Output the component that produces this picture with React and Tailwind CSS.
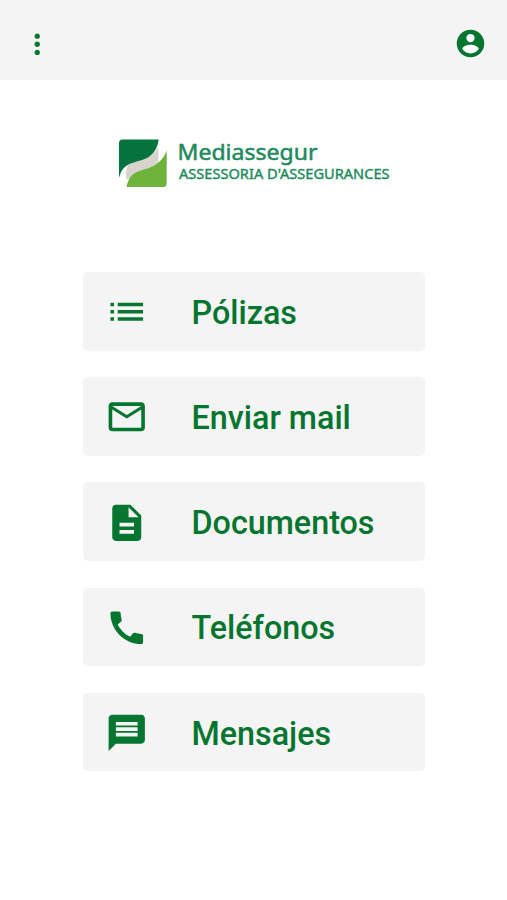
const ICONS = {
  more: "M12 8c1.1 0 2-.9 2-2s-.9-2-2-2-2 .9-2 2 .9 2 2 2zm0 2c-1.1 0-2 .9-2 2s.9 2 2 2 2-.9 2-2-.9-2-2-2zm0 6c-1.1 0-2 .9-2 2s.9 2 2 2 2-.9 2-2-.9-2-2-2z",
  list: "M3 13h2v-2H3v2zm0 4h2v-2H3v2zm0-8h2V7H3v2zm4 4h14v-2H7v2zm0 4h14v-2H7v2zM7 7v2h14V7H7z",
  mail: "M20 4H4c-1.1 0-2 .9-2 2v12c0 1.1.9 2 2 2h16c1.1 0 2-.9 2-2V6c0-1.1-.9-2-2-2zm0 14H4V8l8 5 8-5v10zm-8-7L4 6h16l-8 5z",
  doc: "M14 2H6c-1.1 0-1.99.9-1.99 2L4 20c0 1.1.89 2 1.99 2H18c1.1 0 2-.9 2-2V8l-6-6zm2 16H8v-2h8v2zm0-4H8v-2h8v2zm-3-5V3.5L18.5 9H13z",
  phone: "M20.01 15.38c-1.23 0-2.42-.2-3.53-.56-.35-.12-.74-.03-1.01.24l-1.57 1.97c-2.83-1.35-5.48-3.9-6.89-6.83l1.95-1.66c.27-.28.35-.67.24-1.02-.37-1.11-.56-2.3-.56-3.53 0-.54-.45-.99-.99-.99H4.19C3.65 3 3 3.24 3 3.99 3 13.28 10.73 21 20.01 21c.71 0 .99-.63.99-1.18v-3.45c0-.54-.45-.99-.99-.99z",
  message: "M20 2H4c-1.1 0-1.99.9-1.99 2L2 22l4-4h14c1.1 0 2-.9 2-2V4c0-1.1-.9-2-2-2zm-2 12H6v-2h12v2zm0-3H6V9h12v2zm0-3H6V6h12v2z",
};

const ITEMS = [
  { icon: "list", label: "Pólizas" },
  { icon: "mail", label: "Enviar mail" },
  { icon: "doc", label: "Documentos" },
  { icon: "phone", label: "Teléfonos" },
  { icon: "message", label: "Mensajes" },
];

function Icon({ name, className }) {
  return (
    <svg viewBox="0 0 24 24" fill="currentColor" className={className} aria-hidden="true">
      <path d={ICONS[name]} />
    </svg>
  );
}

function AccountIcon() {
  return (
    <svg viewBox="0 0 24 24" className="size-[33px]" aria-hidden="true">
      <circle cx="12" cy="12" r="10" fill="currentColor" />
      <circle cx="12" cy="8" r="3" fill="#fff" />
      <path
        d="M12 19.2c-2.5 0-4.71-1.28-6-3.22.03-1.99 4-3.08 6-3.08 1.99 0 5.97 1.09 6 3.08-1.29 1.94-3.5 3.22-6 3.22z"
        fill="#fff"
      />
    </svg>
  );
}

function Logo() {
  return (
    <svg viewBox="118 134 274 56" className="ml-[118px] mt-[54px] h-14 w-[274px]" role="img" aria-label="Mediassegur">
      <path d="M127 180C125.500 175 125.500 169 128.500 165C133 160 144 160 150 156C154 153 157 150 158 146.500C158.800 152 158.800 159 158 163L140 172L131 177Z" fill="#d8d3cc" />
      <path d="M119 178V143q0-3.500 3.500-3.500H158.700C157.500 148 154 154 147 158C141 161 132 162 127 165.500C121.500 169 120.500 173 119 178Z" fill="#04733d" />
      <path d="M126.500 187C128.500 177.500 132 174 138 171.500C144 169 149 168.500 154 165.500C161 161.500 165 156 166.700 150V183.500Q166.700 187 163.200 187Z" fill="#6cb23b" />
      <g fill="#1e8a5c" stroke="#1e8a5c" fontFamily="'Noto Sans','Open Sans',sans-serif">
        <text x="177.5" y="159.5" fontSize="21.8" textLength="140" lengthAdjust="spacingAndGlyphs" strokeWidth=".5">
          Mediassegur
        </text>
        <text x="179" y="179.2" fontSize="13.8" textLength="210.5" lengthAdjust="spacingAndGlyphs" strokeWidth=".4">
          ASSESSORIA D'ASSEGURANCES
        </text>
      </g>
    </svg>
  );
}

export default function App() {
  return (
    <div className="flex h-[900px] w-[507px] flex-col overflow-hidden bg-white font-['Roboto',sans-serif] text-[#06752f]">
      <header className="flex h-20 shrink-0 items-center justify-between bg-[#f4f4f4] pl-[21px] pr-5 pt-[7px]">
        <button aria-label="Menú" className="pt-[2px]">
          <Icon name="more" className="size-[32.5px]" />
        </button>
        <button aria-label="Cuenta">
          <AccountIcon />
        </button>
      </header>
      <Logo />
      <nav className="ml-[83px] mt-[82px] flex w-[342px] flex-col gap-[26.7px]">
        {ITEMS.map(({ icon, label }) => (
          <button key={icon} className="flex h-[78.5px] items-center rounded-[5px] bg-[#f4f4f4] pl-[21.5px] pt-[1.5px] text-left">
            <Icon name={icon} className="size-[43.5px] shrink-0" />
            <span className="ml-[43.5px] pt-[2px] text-[32.3px] font-medium leading-none whitespace-nowrap">{label}</span>
          </button>
        ))}
      </nav>
    </div>
  );
}
